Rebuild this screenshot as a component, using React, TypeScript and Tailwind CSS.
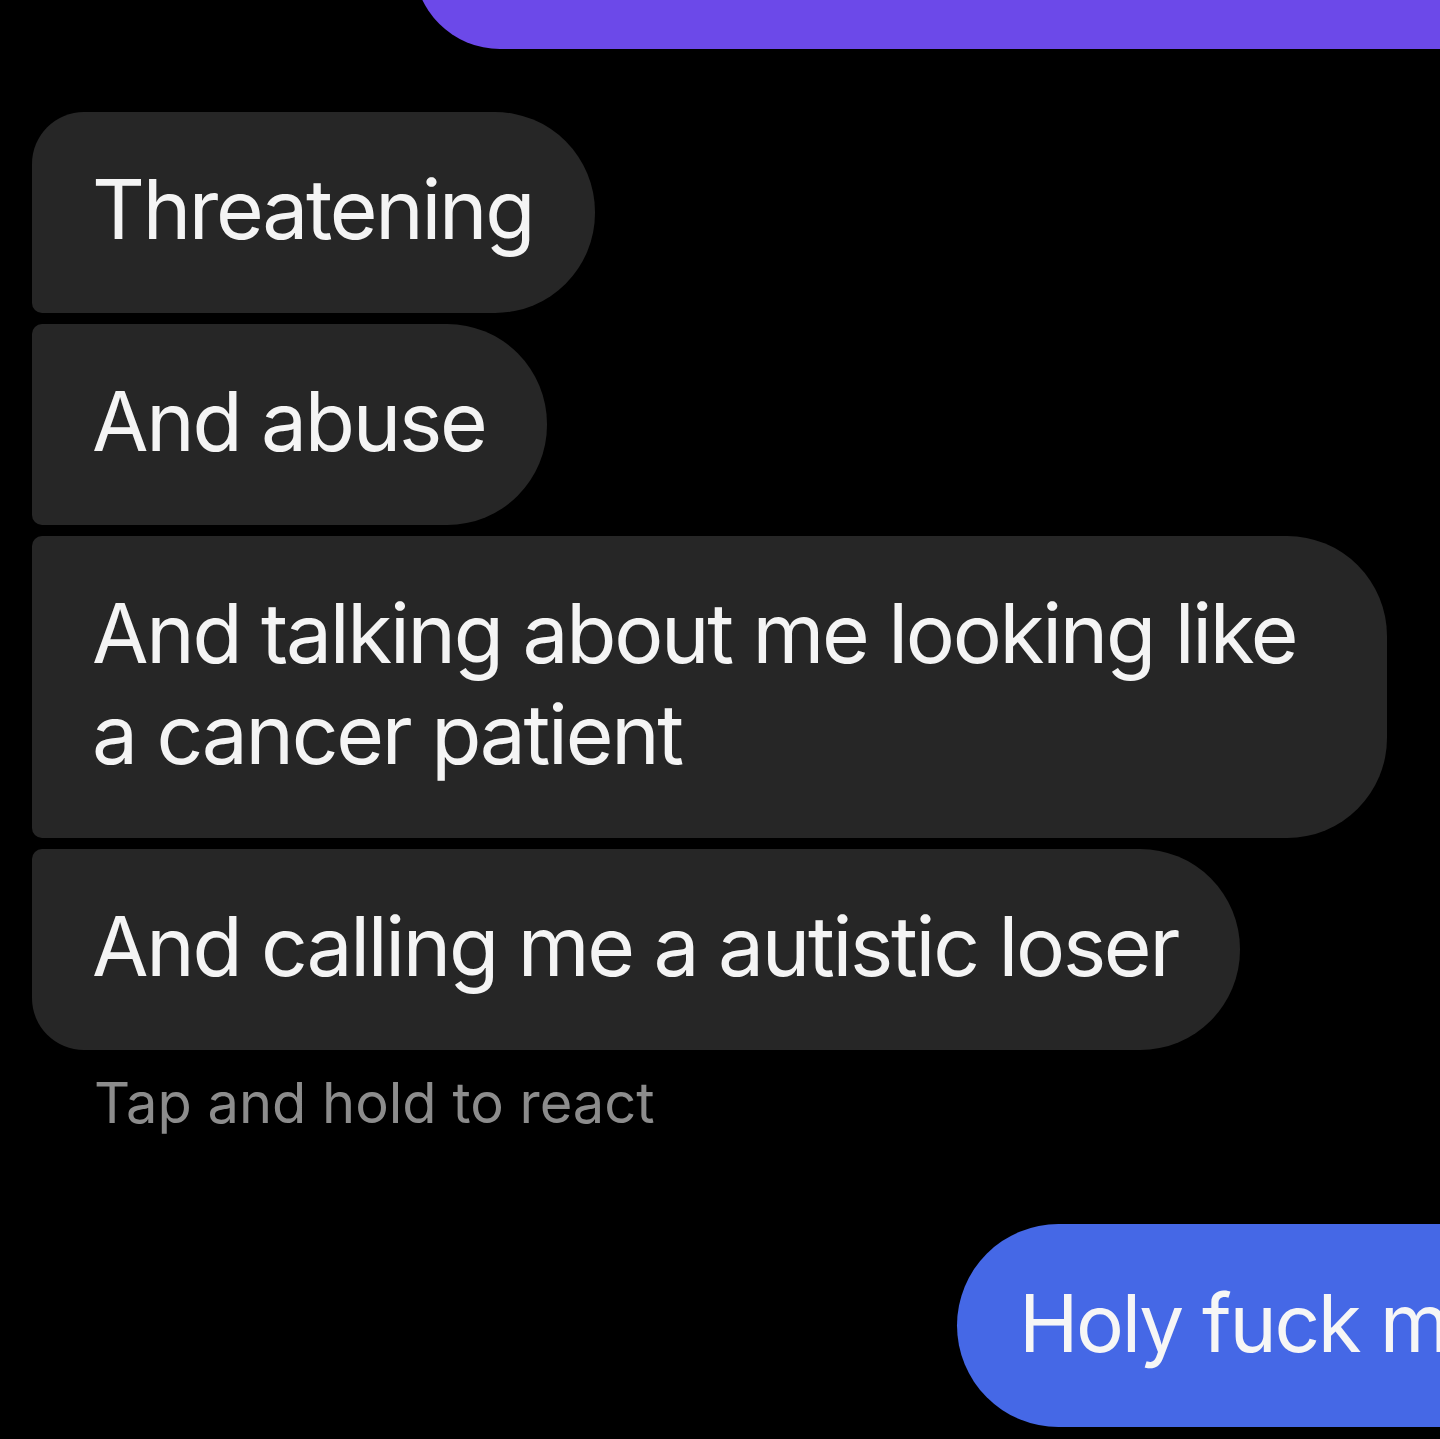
const font = { fontFamily: 'Inter, "Noto Sans", sans-serif' };

function Bubble({ text, className }: { text: string; className: string }) {
  return (
    <div
      className={
        "w-fit bg-[#262626] pt-[47px] pb-[53px] pl-[60px] pr-[62px] text-[82px] leading-[101px] tracking-[-2.3px] text-[#f4f4f4] " +
        className
      }
    >
      {text}
    </div>
  );
}

export default function App() {
  return (
    <div className="h-[1439px] w-full overflow-hidden bg-black" style={font}>
      <div className="flex flex-col">
        <div className="-mt-[150px] ml-[414px] -mr-[100px] h-[199px] rounded-l-[86px] bg-[#6c49e9]" />

        <div className="mt-[63px] flex flex-col gap-[11px] pl-[32px]">
          <Bubble text="Threatening" className="rounded-tl-[52px] rounded-bl-[10px] rounded-r-[100px]" />
          <Bubble text="And abuse" className="rounded-l-[10px] rounded-r-[100px]" />
          <Bubble
            text="And talking about me looking like a cancer patient"
            className="max-w-[1355px] rounded-l-[10px] rounded-r-[100px]"
          />
          <Bubble text="And calling me a autistic loser" className="rounded-tl-[10px] rounded-bl-[52px] rounded-r-[100px]" />
        </div>

        <div className="mt-[18px] pl-[94px] text-[56px] leading-[70px] text-[#8c8c8c]">
          Tap and hold to react
        </div>

        <div className="mt-[86px] flex justify-end">
          <div className="-mr-[175px] h-[203px] whitespace-nowrap rounded-l-[102px] bg-[#4568e6] pt-[48px] pb-[54px] pl-[62px] pr-[80px] text-[80px] leading-[101px] tracking-[-2.3px] text-[#f6f6f6]">
            Holy fuck man
          </div>
        </div>
      </div>
    </div>
  );
}
